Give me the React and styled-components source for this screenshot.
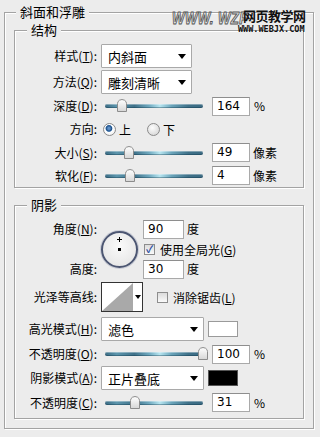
import React from 'react';
import styled, { createGlobalStyle } from 'styled-components';

const bg = '#ececec';
const etch = '#a3a3a3';
const font = '"Noto Sans CJK SC", "Liberation Sans", sans-serif';

const GlobalStyle = createGlobalStyle`
  html, body {
    margin: 0;
    padding: 0;
    background: ${bg};
  }
  body {
    font-family: ${font};
    font-size: 12px;
    color: #000;
  }
`;

const Page = styled.div`
  position: relative;
  width: 320px;
  height: 437px;
  box-sizing: border-box;
  padding: 4px 6px 0 4px;
  overflow: hidden;
`;

const Group = styled.fieldset`
  margin: ${(p) => p.$mt || 0}px 0 0 0;
  padding: ${(p) => p.$pad};
  min-width: 0;
  border: 1px solid ${etch};
  box-shadow: inset 1px 1px 0 #fff, 1px 1px 0 #fff;
`;

const Legend = styled.legend`
  margin-left: ${(p) => p.$ml}px;
  padding: 0 4px;
  background: ${bg};
  line-height: 16px;
  font-size: 13px;
`;

const Row = styled.div`
  display: flex;
  align-items: center;
  height: ${(p) => p.$h}px;
`;

const Label = styled.span`
  width: 82px;
  flex: none;
  text-align: right;
  white-space: nowrap;
  line-height: 16px;
`;

const Select = styled.div`
  display: flex;
  align-items: center;
  justify-content: space-between;
  box-sizing: border-box;
  width: ${(p) => p.$w}px;
  height: 24px;
  margin-left: 4px;
  padding: 0 5px 0 6px;
  background: #fff;
  border: 1px solid #a9a9a9;
  border-radius: 1px;
  font-size: 13px;
`;

const Caret = styled.span`
  width: 0;
  height: 0;
  border-left: 4px solid transparent;
  border-right: 4px solid transparent;
  border-top: 5px solid #000;
`;

const Swatch = styled.div`
  width: 30px;
  height: 16px;
  margin-left: 4px;
  box-sizing: border-box;
  background: ${(p) => p.$color};
  border: 1px solid ${(p) => (p.$color === '#000' ? '#555' : '#9a9a9a')};
`;

const Track = styled.div`
  position: relative;
  width: 98px;
  height: 4px;
  margin-left: 8px;
  border-radius: 2px;
  background: linear-gradient(
    to right,
    #3b6c84 0%,
    #5d96ad 12%,
    #3f7189 30%,
    #6fa9bf 45%,
    #b6e4ef 56%,
    #6aa4ba 68%,
    #3f7189 85%,
    #3b6a82 100%
  );
  box-shadow: inset 0 1px 0 rgba(255, 255, 255, 0.35), inset 0 -1px 0 rgba(0, 40, 60, 0.35);
`;

const Thumb = styled.svg`
  position: absolute;
  top: -5px;
  margin-left: -5px;
`;

const NumBox = styled.div`
  box-sizing: border-box;
  width: ${(p) => p.$w || 38}px;
  height: 19px;
  margin-left: ${(p) => p.$ml ?? 9}px;
  padding-left: 4px;
  background: #fff;
  border: 1px solid #a9a9a9;
  border-top-color: #8e8e8e;
  line-height: 17px;
  font-size: 12px;
  font-family: "DejaVu Sans", ${font};
`;

const Unit = styled.span`
  margin-left: ${(p) => p.$ml ?? 4}px;
  line-height: 16px;
`;

const Radio = styled.span`
  width: 11px;
  height: 11px;
  margin: 0 3px 0 ${(p) => p.$ml}px;
  border-radius: 50%;
  border: 1px solid #8a8a8a;
  background: ${(p) =>
    p.$on
      ? 'radial-gradient(circle at 45% 40%, #5d8fc8 0 1px, #1d4f86 2.8px, #6e97c4 3.3px, #fff 3.8px, #e6e6e6 100%)'
      : 'radial-gradient(circle at 40% 35%, #fdfdfd, #cfcfcf)'};
`;

const Check = styled.span`
  display: flex;
  align-items: center;
  justify-content: center;
  box-sizing: border-box;
  width: 11px;
  height: 11px;
  margin: 0 5px 0 ${(p) => p.$ml}px;
  border: 1px solid #8d8d8d;
  background: linear-gradient(#dcdcdc, #fafafa);
  color: #2a4aa0;
  font-size: 10px;
  font-weight: bold;
  line-height: 1;
`;

const AngleGrid = styled.div`
  display: grid;
  grid-template-columns: 82px 44px auto;
  grid-template-rows: repeat(3, 20px);
  align-items: center;
`;

const Dial = styled.div`
  grid-row: 1 / 4;
  grid-column: 2;
  justify-self: center;
  position: relative;
  width: 37px;
  height: 37px;
  box-sizing: border-box;
  border-radius: 50%;
  border: 2px solid #4c5672;
  background: radial-gradient(circle at 50% 40%, #fafafa, #e2e2e2);
  box-shadow: 0 0 0 1px #c9ccd6;
`;

const Cross = styled.span`
  position: absolute;
  left: 14px;
  top: 4px;
  width: 5px;
  height: 5px;
  background: linear-gradient(#000, #000) center / 1px 5px no-repeat,
    linear-gradient(#000, #000) center / 5px 1px no-repeat;
`;

const Dot = styled.span`
  position: absolute;
  left: 15px;
  top: 15px;
  width: 3px;
  height: 3px;
  background: #000;
`;

const Cell = styled.div`
  display: flex;
  align-items: center;
  grid-column: ${(p) => p.$col};
  grid-row: ${(p) => p.$row};
`;

const Contour = styled.div`
  display: flex;
  width: 42px;
  height: 30px;
  margin-left: 4px;
  box-sizing: border-box;
  border: 1px solid #333;
  background: #fff;
`;

const ContourCaret = styled.div`
  flex: 1;
  display: flex;
  align-items: center;
  justify-content: center;
  & > span {
    border-left: 3px solid transparent;
    border-right: 3px solid transparent;
    border-top: 4px solid #000;
  }
`;

const Watermark = styled.div`
  position: absolute;
  left: 172px;
  top: 7px;
  pointer-events: none;
`;

const WmUrl = styled.span`
  position: absolute;
  left: 0;
  top: 3px;
  font-family: "Liberation Sans", sans-serif;
  font-size: 17px;
  line-height: 18px;
  font-weight: bold;
  font-style: italic;
  letter-spacing: 0.5px;
  color: #e6e6e6;
  -webkit-text-stroke: 1px #555;
  white-space: nowrap;
  transform: scaleX(0.78);
  transform-origin: left center;
`;

const WmName = styled.span`
  position: absolute;
  left: 71px;
  top: 1px;
  font-size: 13px;
  line-height: 15px;
  font-weight: bold;
  color: #111;
  white-space: nowrap;
  letter-spacing: -0.5px;
`;

const WmSite = styled.span`
  position: absolute;
  left: 66px;
  top: 18px;
  font-family: "DejaVu Sans Mono", monospace;
  font-size: 8.5px;
  line-height: 9px;
  font-weight: bold;
  color: #111;
  white-space: nowrap;
`;

const Slider = ({ pct }) => (
  <Track>
    <Thumb width="10" height="13" viewBox="0 0 10 13" style={{ left: `${pct}%` }}>
      <defs>
        <linearGradient id="tg" x1="0" y1="0" x2="0" y2="1">
          <stop offset="0" stopColor="#ffffff" />
          <stop offset="1" stopColor="#d6d6d6" />
        </linearGradient>
      </defs>
      <path d="M0.5 12.5 V4.5 Q0.5 2.5 2.5 1.2 L5 0.5 L7.5 1.2 Q9.5 2.5 9.5 4.5 V12.5 Z" fill="url(#tg)" stroke="#8c8c8c" />
    </Thumb>
  </Track>
);

const Key = ({ children }) => <u>{children}</u>;

const App = () => {
  return (
    <Page>
      <GlobalStyle />
      <Group $pad="2px 9px 9px 9px">
        <Legend $ml={2}>斜面和浮雕</Legend>

        <Group $pad="5px 0 0 0">
          <Legend $ml={12}>结构</Legend>
          <Row $h={26}>
            <Label>样式(<Key>T</Key>):</Label>
            <Select $w={91}>内斜面<Caret /></Select>
          </Row>
          <Row $h={26}>
            <Label>方法(<Key>Q</Key>):</Label>
            <Select $w={91}>雕刻清晰<Caret /></Select>
          </Row>
          <Row $h={22}>
            <Label>深度(<Key>D</Key>):</Label>
            <Slider pct={17} />
            <NumBox>164</NumBox>
            <Unit>%</Unit>
          </Row>
          <Row $h={24}>
            <Label>方向:</Label>
            <Radio $ml={6} $on />上
            <Radio $ml={16} />下
          </Row>
          <Row $h={23}>
            <Label>大小(<Key>S</Key>):</Label>
            <Slider pct={24} />
            <NumBox>49</NumBox>
            <Unit $ml={3}>像素</Unit>
          </Row>
          <Row $h={23}>
            <Label>软化(<Key>F</Key>):</Label>
            <Slider pct={25} />
            <NumBox>4</NumBox>
            <Unit $ml={3}>像素</Unit>
          </Row>
        </Group>

        <Group $mt={9} $pad="6px 0 4px 0">
          <Legend $ml={12}>阴影</Legend>
          <AngleGrid>
            <Label>角度(<Key>N</Key>):</Label>
            <Dial>
              <Cross />
              <Dot />
            </Dial>
            <Cell $col={3} $row={1}>
              <NumBox $w={41} $ml={2}>90</NumBox>
              <Unit $ml={3}>度</Unit>
            </Cell>
            <Cell $col={3} $row={2}>
              <Check $ml={3}>✓</Check>使用全局光(<Key>G</Key>)
            </Cell>
            <Cell $col={1} $row={3}>
              <Label>高度:</Label>
            </Cell>
            <Cell $col={3} $row={3}>
              <NumBox $w={41} $ml={2}>30</NumBox>
              <Unit $ml={3}>度</Unit>
            </Cell>
          </AngleGrid>
          <Row $h={36}>
            <Label>光泽等高线:</Label>
            <Contour>
              <svg width="31" height="28" viewBox="0 0 31 28">
                <polygon points="0,28 31,0 31,28" fill="#a9a9a9" />
              </svg>
              <ContourCaret><span /></ContourCaret>
            </Contour>
            <Check $ml={14} />消除锯齿(<Key>L</Key>)
          </Row>
          <Row $h={28}>
            <Label>高光模式(<Key>H</Key>):</Label>
            <Select $w={103}>滤色<Caret /></Select>
            <Swatch $color="#fff" />
          </Row>
          <Row $h={22}>
            <Label>不透明度(<Key>O</Key>):</Label>
            <Slider pct={100} />
            <NumBox>100</NumBox>
            <Unit>%</Unit>
          </Row>
          <Row $h={26}>
            <Label>阴影模式(<Key>A</Key>):</Label>
            <Select $w={103}>正片叠底<Caret /></Select>
            <Swatch $color="#000" />
          </Row>
          <Row $h={23}>
            <Label>不透明度(<Key>C</Key>):</Label>
            <Slider pct={31} />
            <NumBox>31</NumBox>
            <Unit>%</Unit>
          </Row>
        </Group>
      </Group>

      <Watermark>
        <WmUrl>WWW. WZF</WmUrl>
        <WmName>网页教学网</WmName>
        <WmSite>WWW.WEBJX.COM</WmSite>
      </Watermark>
    </Page>
  );
};

export default App;
